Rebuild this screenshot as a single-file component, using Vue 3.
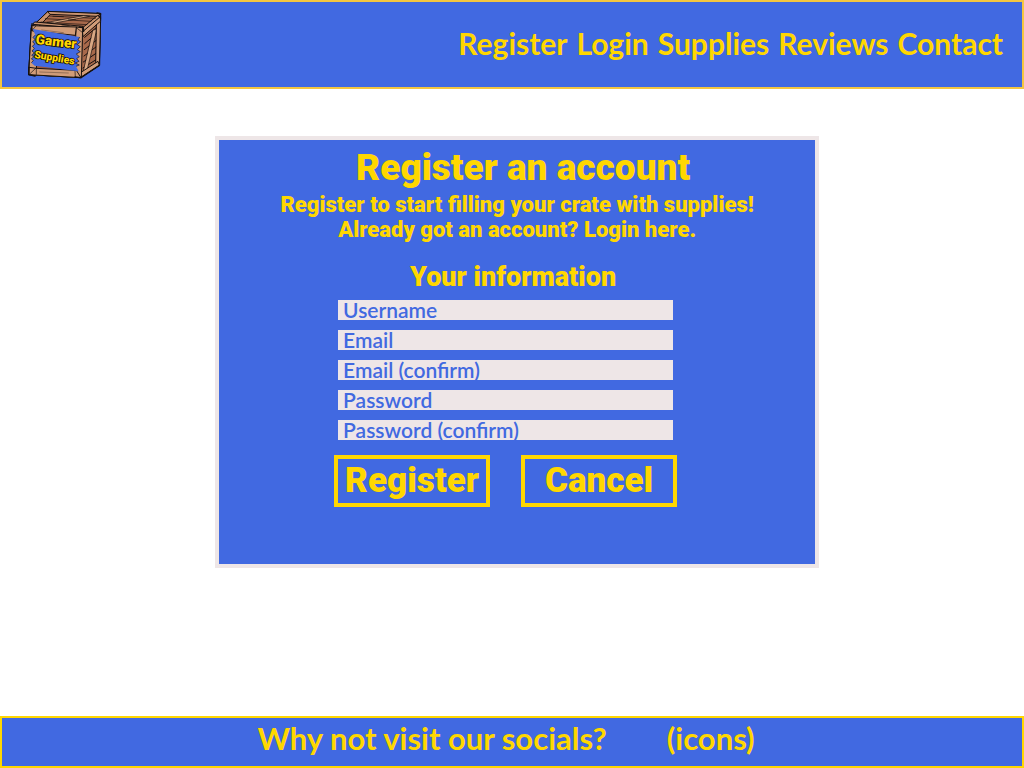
<script setup>
import { reactive } from 'vue'

const links = ['Register', 'Login', 'Supplies', 'Reviews', 'Contact']

const fields = [
  { id: 'username', label: 'Username', type: 'text' },
  { id: 'email', label: 'Email', type: 'email' },
  { id: 'email-confirm', label: 'Email (confirm)', type: 'email' },
  { id: 'password', label: 'Password', type: 'password' },
  { id: 'password-confirm', label: 'Password (confirm)', type: 'password' },
]

const values = reactive({})

function reset() {
  fields.forEach((field) => {
    values[field.id] = ''
  })
}
</script>

<template>
  <div class="page">
    <header class="header">
      <a class="logo" href="#" aria-label="Gamer Supplies home">
        <svg viewBox="0 0 270 240" width="90" height="80">
          <g stroke="#17110f" stroke-width="3" stroke-linejoin="round" stroke-linecap="round">
            <path d="M35 66 L83 20 L241 26 L239 181 L181 218 L27 209 Z" fill="#a8694b" />
            <!-- lid planks -->
            <path d="M36 65 L83 20 L98 21 L55 66 Z" fill="#c9936f" />
            <path d="M83 20 L90 28 L232 34 L241 26 Z" fill="#c9936f" />
            <path d="M188 68 L232 32 L242 36 L193 79 Z" fill="#c9936f" />
            <path d="M39 58 L182 70 L190 64 L45 51 Z" fill="#c9936f" />
            <path d="M63 51 L201 59 M76 41 L213 49 M88 33 L226 40" stroke-width="2" />
            <path d="M82 52 L191 32 L209 34 L105 54 Z" fill="#d8a783" stroke-width="2" />
            <path d="M99 34 L130 35 M145 45 L166 43 M126 60 L148 62" stroke-width="2" />
            <!-- right side planks -->
            <path d="M188 82 L242 38 L238 181 L181 218 Z" fill="#a8694b" />
            <path d="M194 97 L231 66 M194 116 L230 85 M193 134 L230 105 M192 153 L229 125 M190 171 L228 145 M189 189 L228 164" stroke-width="3" />
            <path d="M219 76 L231 71 L202 193 L190 201 Z" fill="#d8a783" stroke-width="2" />
            <path d="M230 49 L242 38 L238 181 L228 183 Z" fill="#d19c78" />
            <path d="M180 204 L234 169 L238 181 L181 218 Z" fill="#d19c78" />
            <path d="M188 80 L242 34 L241 49 L190 94 Z" fill="#d19c78" />
            <!-- front frame -->
            <path d="M35 68 L188 82 L181 218 L27 209 Z" fill="#99583c" />
            <path d="M35 68 L56 70 L48 209 L27 209 Z" fill="#d19c78" />
            <path d="M169 66 L188 68 L184 218 L165 206 Z" fill="#d19c78" />
            <path d="M35 62 L169 66 L166 91 L38 78 Z" fill="#d19c78" />
            <path d="M28 187 L49 190 L169 196 L183 218 L27 209 Z" fill="#d19c78" />
            <path d="M49 188 L49 208 M165 197 L166 216 M29 207 L47 190 M169 68 L188 83 M36 76 L47 64" stroke-width="2" />
            <path d="M65 75 L130 83 M59 201 L145 204" stroke-width="1" />
            <path d="M27 187 L27 209 L45 213 M165 216 L183 218 L238 181 M36 56 L35 76 M178 66 L190 68 L191 79 M231 24 L242 26 L241 40" fill="none" stroke-width="4" />
          </g>
          <path
            d="M38 72 L179 96 L174 105 L182 110 L172 119 L181 125 L172 134 L181 140 L169 147 L178 155 L170 161 L177 169 L166 174 L178 180 L168 184 L176 199 L44 182 L34 173 L40 167 L34 161 L41 156 L35 150 L43 144 L36 138 L43 130 L37 124 L44 117 L38 110 L45 104 L39 97 L46 90 Z"
            fill="#4169e1"
          />
          <path
            d="M179 96 L174 105 L182 110 L172 119 L181 125 L172 134 L181 140 L169 147 L178 155 L170 161 L177 169 L166 174 L178 180 L168 184 M34 173 L40 167 L34 161 L41 156 L35 150 L43 144 L36 138 L43 130 L37 124 L44 117 L38 110 L45 104 L39 97 L46 90"
            fill="none"
            stroke="#17110f"
            stroke-width="2"
          />
          <text class="logo-text" x="46" y="116" font-size="41" transform="rotate(7 46 116)">Gamer</text>
          <text class="logo-text" x="42" y="158" font-size="31" transform="rotate(10 42 158)">Supplies</text>
        </svg>
      </a>
      <nav class="nav">
        <a v-for="link in links" :key="link" :href="'#' + link.toLowerCase()">{{ link }}</a>
      </nav>
    </header>

    <main class="main">
      <section class="panel">
        <h1>Register an account</h1>
        <p>Register to start filling your crate with supplies!</p>
        <p>Already got an account? <a href="#login">Login here.</a></p>
        <h2>Your information</h2>
        <form class="form" @submit.prevent>
          <input
            v-for="field in fields"
            :id="field.id"
            :key="field.id"
            v-model="values[field.id]"
            :type="field.type"
            :placeholder="field.label"
            :aria-label="field.label"
          />
          <div class="actions">
            <button type="submit">Register</button>
            <button type="button" @click="reset">Cancel</button>
          </div>
        </form>
      </section>
    </main>

    <footer class="footer">
      <span>Why not visit our socials?</span>
      <span>(icons)</span>
    </footer>
  </div>
</template>

<style>
body {
  margin: 0;
  background: #ffffff;
}
</style>

<style scoped>
.page {
  display: flex;
  flex-direction: column;
  min-height: 100vh;
  font-family: Lato, sans-serif;
  color: #ffd700;
}

.page,
.page * {
  box-sizing: border-box;
}

a {
  color: inherit;
  text-decoration: none;
}

.header {
  display: flex;
  align-items: center;
  justify-content: space-between;
  padding: 3px 19px 2px 18px;
  background: #4169e1;
  border: 2px solid #f4c63f;
}

.logo svg {
  display: block;
}

.logo-text {
  font-family: Roboto, sans-serif;
  font-weight: 900;
  fill: #ffd700;
  stroke: #17110f;
  stroke-width: 5px;
  paint-order: stroke;
}

.nav {
  display: flex;
  gap: 9px;
  padding-bottom: 4px;
  font-size: 30px;
  font-weight: 700;
  line-height: 40px;
}

.main {
  flex: 1;
  padding: 47px 20% 48px 21%;
}

.panel {
  padding: 8px 0 57px;
  background: #4169e1;
  border: 4px solid #eee6e7;
  font-family: Roboto, sans-serif;
  font-weight: 900;
  text-align: center;
}

h1,
h2,
p {
  margin: 0;
  font-weight: 900;
}

h1 {
  padding-left: 12px;
  font-size: 37px;
  line-height: 40px;
}

p {
  font-size: 22px;
  line-height: 25px;
}

p:first-of-type {
  padding-top: 4px;
}

h2 {
  padding: 20px 8px 8px 0;
  font-size: 27px;
  line-height: 30px;
}

.form {
  display: flex;
  flex-direction: column;
  align-items: center;
  gap: 10px;
  padding-right: 23px;
}

input {
  width: 335px;
  max-width: 100%;
  height: 20px;
  padding: 0 5px 2px;
  border: 0;
  border-radius: 0;
  background: #eee6e7;
  color: #4169e1;
  font-family: Lato, sans-serif;
  font-size: 21px;
  font-weight: 600;
  line-height: 18px;
}

input::placeholder {
  color: #4169e1;
  opacity: 1;
  line-height: 18px;
}

.actions {
  display: flex;
  gap: 31px;
  padding-top: 5px;
}

button {
  width: 156px;
  height: 52px;
  padding: 0;
  border: 4px solid #ffd700;
  background: transparent;
  color: #ffd700;
  font-family: Roboto, sans-serif;
  font-size: 35px;
  font-weight: 900;
  line-height: 40px;
}

.footer {
  display: flex;
  justify-content: center;
  gap: 60px;
  padding: 0 12px 8px 0;
  background: #4169e1;
  border: 2px solid #ffd700;
  font-size: 31px;
  font-weight: 700;
  line-height: 40px;
}
</style>
